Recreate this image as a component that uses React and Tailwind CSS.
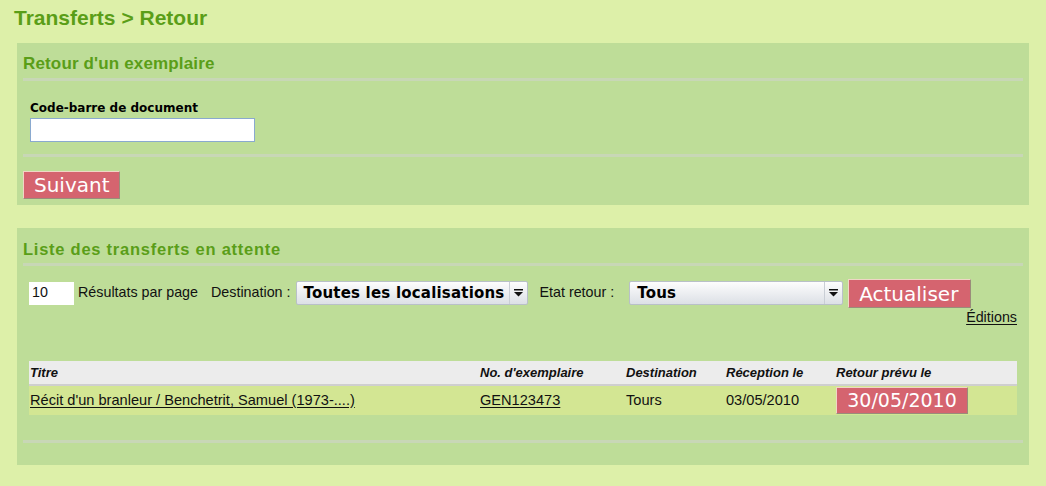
import React from "react";

const SelectArrow = () => (
  <span className="flex h-full w-[18px] items-center justify-center border-l border-[#c9ced5]">
    <svg width="9" height="8" viewBox="0 0 9 8">
      <rect x="0" y="0" width="9" height="1.5" fill="#111" />
      <path d="M0 3 L9 3 L4.5 7.5 Z" fill="#111" />
    </svg>
  </span>
);

const Select = ({ label, width }) => (
  <div
    className={`flex h-[24px] items-center rounded-[2px] border border-[#b9c0c8] bg-gradient-to-b from-[#fdfdfd] to-[#dce0e6] ${width}`}
  >
    <span className="flex-1 pl-[7px] font-['DejaVu_Sans',sans-serif] text-[15px] font-bold leading-[22px] tracking-[0.2px] text-black">
      {label}
    </span>
    <SelectArrow />
  </div>
);

const RedButton = ({ children, className = "" }) => (
  <div
    className={`flex items-center border-t border-l border-[#f0d6c6] border-b border-r border-b-[#9a8c7a] border-r-[#9a8c7a] bg-[#d5646f] font-['DejaVu_Sans',sans-serif] text-white ${className}`}
  >
    {children}
  </div>
);

const Sep = () => <div className="h-[3px] bg-[#c8d7b6]" />;

export default function App() {
  return (
    <div className="min-h-[486px] w-[1046px] bg-[#ddf0a9] pb-[21px] font-['Liberation_Sans',Arial,sans-serif]">
      <h1 className="pl-[14px] pt-[5px] text-[21px] font-bold leading-[25px] text-[#5a9e18]">
        Transferts &gt; Retour
      </h1>

      {/* Panel 1 */}
      <div className="mx-[17px] mt-[13px] h-[162px] bg-[#bedd98] px-[6px] pt-[12px]">
        <h2 className="pb-[5px] text-[17px] font-bold leading-[18px] tracking-[0.15px] text-[#5a9e18]">
          Retour d'un exemplaire
        </h2>
        <Sep />
        <div className="px-[7px] pt-[20px]">
          <div className="font-['DejaVu_Sans',sans-serif] text-[12px] font-bold leading-[15px] text-black">
            Code-barre de document
          </div>
          <div className="mt-[2px] h-[24px] w-[225px] border border-[#8aa9cf] bg-white" />
        </div>
        <div className="mt-[12px]">
          <Sep />
        </div>
        <RedButton className="mt-[14px] h-[28px] w-[97px] pl-[10px] text-[20px]">
          Suivant
        </RedButton>
      </div>

      {/* Panel 2 */}
      <div className="mx-[17px] mt-[23px] h-[237px] bg-[#bedd98] px-[6px] pt-[12px]">
        <h2 className="pb-[5px] text-[16.5px] font-bold leading-[18px] tracking-[0.75px] text-[#5a9e18]">
          Liste des transferts en attente
        </h2>
        <Sep />
        <div className="px-[6px]">
          <div className="mt-[13px] flex h-[28px] items-center text-[14.3px] text-[#111]">
            <div className="flex h-[23px] w-[45px] items-center bg-white pl-[3px] text-[14.3px]">10</div>
            <span className="ml-[4px]">Résultats par page</span>
            <span className="ml-[13px]">Destination :</span>
            <div className="ml-[5px]">
              <Select label="Toutes les localisations" width="w-[232px]" />
            </div>
            <span className="ml-[12px]">Etat retour :</span>
            <div className="ml-[15px]">
              <Select label="Tous" width="w-[214px]" />
            </div>
            <RedButton className="ml-[5px] h-[29px] w-[123px] self-start pl-[10px] text-[20px]">
              Actualiser
            </RedButton>
          </div>
          <div className="flex justify-end pt-[2px]">
            <a className="text-[14.3px] leading-[17px] text-[#111] underline underline-offset-2">Éditions</a>
          </div>

          <div className="mt-[35px]">
            <div className="flex h-[25px] items-center border-b-[2px] border-[#cfcfcf] bg-[#ececec] text-[13px] font-bold italic text-[#111]">
              <span className="w-[451px] pl-[1px]">Titre</span>
              <span className="w-[146px]">No. d'exemplaire</span>
              <span className="w-[100px]">Destination</span>
              <span className="w-[110px]">Réception le</span>
              <span>Retour prévu le</span>
            </div>
            <div className="flex h-[29px] items-center bg-[#d3e693] text-[14.6px] text-[#111]">
              <span className="w-[451px] pl-[1px]">
                <span className="underline underline-offset-2">Récit d'un branleur / Benchetrit, Samuel (1973-....)</span>
              </span>
              <span className="w-[146px]">
                <span className="underline underline-offset-2">GEN123473</span>
              </span>
              <span className="w-[100px]">Tours</span>
              <span className="w-[110px]">03/05/2010</span>
              <RedButton className="h-[27px] w-[132px] justify-center text-[19px]">30/05/2010</RedButton>
            </div>
          </div>
        </div>
        <div className="mt-[25px]">
          <Sep />
        </div>
      </div>
    </div>
  );
}
